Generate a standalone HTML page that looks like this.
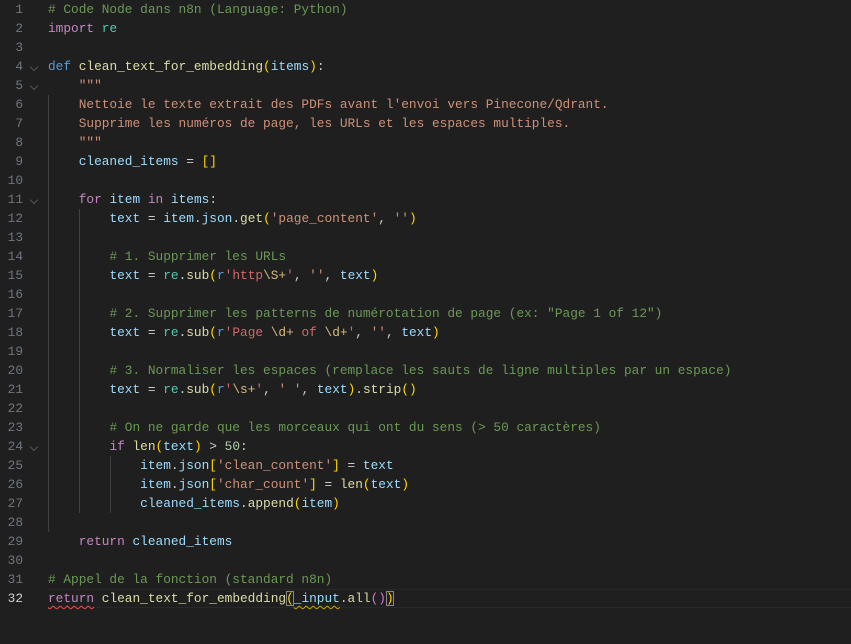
<!DOCTYPE html>
<html><head><meta charset="utf-8"><style>
html,body{margin:0;padding:0;background:#1f1f1f;width:851px;height:644px;overflow:hidden}
body{position:relative;font-family:"Liberation Mono",monospace;font-size:12.8px;color:#cccccc}
.l{position:absolute;left:0;height:19px;line-height:19px;white-space:pre;width:851px}
.ln{position:absolute;left:0;width:23px;text-align:right;color:#6e7681}
.cd{position:absolute;left:48px}
.c{color:#6a9955}.k{color:#c586c0}.d{color:#569cd6}.f{color:#dcdcaa}.v{color:#9cdcfe}
.s{color:#ce9178}.y{color:#ffd700}.p{color:#da70d6}.t{color:#4ec9b0}.n{color:#b5cea8}
.e{color:#d7ba7d}.r{color:#d16969}
.g{position:absolute;width:1px;background:#404040}
.fold{position:absolute;left:31px;width:5px;height:5px;border-right:1px solid #555;border-bottom:1px solid #555;transform:rotate(45deg)}
.cur{position:absolute;left:47px;top:589px;width:804px;height:17px;border-top:1px solid #282828;border-bottom:1px solid #282828}
.sq{text-decoration:underline wavy #f14c4c;text-decoration-thickness:1px;text-underline-offset:3px}
.sq2{text-decoration:underline wavy #cca700;text-decoration-thickness:1px;text-underline-offset:3px}
.bx{outline:1px solid #888;outline-offset:-1px}
</style></head><body>
<div class="cur"></div>
<div class="g" style="left:48px;top:95px;height:437px"></div>
<div class="g" style="left:79px;top:209px;height:304px"></div>
<div class="g" style="left:110px;top:456px;height:57px"></div>
<div class="fold" style="top:64px"></div>
<div class="fold" style="top:83px"></div>
<div class="fold" style="top:197px"></div>
<div class="fold" style="top:444px"></div>

<div class="l" style="top:0"><span class="ln">1</span><span class="cd"><span class="c"># Code Node dans n8n (Language: Python)</span></span></div>
<div class="l" style="top:19px"><span class="ln">2</span><span class="cd"><span class="k">import</span> <span class="t">re</span></span></div>
<div class="l" style="top:38px"><span class="ln">3</span></div>
<div class="l" style="top:57px"><span class="ln">4</span><span class="cd"><span class="d">def</span> <span class="f">clean_text_for_embedding</span><span class="y">(</span><span class="v">items</span><span class="y">)</span>:</span></div>
<div class="l" style="top:76px"><span class="ln">5</span><span class="cd"><span class="s">    """</span></span></div>
<div class="l" style="top:95px"><span class="ln">6</span><span class="cd"><span class="s">    Nettoie le texte extrait des PDFs avant l'envoi vers Pinecone/Qdrant.</span></span></div>
<div class="l" style="top:114px"><span class="ln">7</span><span class="cd"><span class="s">    Supprime les numéros de page, les URLs et les espaces multiples.</span></span></div>
<div class="l" style="top:133px"><span class="ln">8</span><span class="cd"><span class="s">    """</span></span></div>
<div class="l" style="top:152px"><span class="ln">9</span><span class="cd">    <span class="v">cleaned_items</span> = <span class="y">[]</span></span></div>
<div class="l" style="top:171px"><span class="ln">10</span></div>
<div class="l" style="top:190px"><span class="ln">11</span><span class="cd">    <span class="k">for</span> <span class="v">item</span> <span class="k">in</span> <span class="v">items</span>:</span></div>
<div class="l" style="top:209px"><span class="ln">12</span><span class="cd">        <span class="v">text</span> = <span class="v">item</span>.<span class="v">json</span>.<span class="f">get</span><span class="y">(</span><span class="s">'page_content'</span>, <span class="s">''</span><span class="y">)</span></span></div>
<div class="l" style="top:228px"><span class="ln">13</span></div>
<div class="l" style="top:247px"><span class="ln">14</span><span class="cd">        <span class="c"># 1. Supprimer les URLs</span></span></div>
<div class="l" style="top:266px"><span class="ln">15</span><span class="cd">        <span class="v">text</span> = <span class="t">re</span>.<span class="f">sub</span><span class="y">(</span><span class="d">r</span><span class="r">'http</span><span class="e">\S+</span><span class="r">'</span>, <span class="s">''</span>, <span class="v">text</span><span class="y">)</span></span></div>
<div class="l" style="top:285px"><span class="ln">16</span></div>
<div class="l" style="top:304px"><span class="ln">17</span><span class="cd">        <span class="c"># 2. Supprimer les patterns de numérotation de page (ex: "Page 1 of 12")</span></span></div>
<div class="l" style="top:323px"><span class="ln">18</span><span class="cd">        <span class="v">text</span> = <span class="t">re</span>.<span class="f">sub</span><span class="y">(</span><span class="d">r</span><span class="r">'Page </span><span class="e">\d+</span><span class="r"> of </span><span class="e">\d+</span><span class="r">'</span>, <span class="s">''</span>, <span class="v">text</span><span class="y">)</span></span></div>
<div class="l" style="top:342px"><span class="ln">19</span></div>
<div class="l" style="top:361px"><span class="ln">20</span><span class="cd">        <span class="c"># 3. Normaliser les espaces (remplace les sauts de ligne multiples par un espace)</span></span></div>
<div class="l" style="top:380px"><span class="ln">21</span><span class="cd">        <span class="v">text</span> = <span class="t">re</span>.<span class="f">sub</span><span class="y">(</span><span class="d">r</span><span class="r">'</span><span class="e">\s+</span><span class="r">'</span>, <span class="s">' '</span>, <span class="v">text</span><span class="y">)</span>.<span class="f">strip</span><span class="y">()</span></span></div>
<div class="l" style="top:399px"><span class="ln">22</span></div>
<div class="l" style="top:418px"><span class="ln">23</span><span class="cd">        <span class="c"># On ne garde que les morceaux qui ont du sens (&gt; 50 caractères)</span></span></div>
<div class="l" style="top:437px"><span class="ln">24</span><span class="cd">        <span class="k">if</span> <span class="f">len</span><span class="y">(</span><span class="v">text</span><span class="y">)</span> &gt; <span class="n">50</span>:</span></div>
<div class="l" style="top:456px"><span class="ln">25</span><span class="cd">            <span class="v">item</span>.<span class="v">json</span><span class="y">[</span><span class="s">'clean_content'</span><span class="y">]</span> = <span class="v">text</span></span></div>
<div class="l" style="top:475px"><span class="ln">26</span><span class="cd">            <span class="v">item</span>.<span class="v">json</span><span class="y">[</span><span class="s">'char_count'</span><span class="y">]</span> = <span class="f">len</span><span class="y">(</span><span class="v">text</span><span class="y">)</span></span></div>
<div class="l" style="top:494px"><span class="ln">27</span><span class="cd">            <span class="v">cleaned_items</span>.<span class="f">append</span><span class="y">(</span><span class="v">item</span><span class="y">)</span></span></div>
<div class="l" style="top:513px"><span class="ln">28</span></div>
<div class="l" style="top:532px"><span class="ln">29</span><span class="cd">    <span class="k">return</span> <span class="v">cleaned_items</span></span></div>
<div class="l" style="top:551px"><span class="ln">30</span></div>
<div class="l" style="top:570px"><span class="ln">31</span><span class="cd"><span class="c"># Appel de la fonction (standard n8n)</span></span></div>
<div class="l" style="top:589px"><span class="ln" style="color:#cccccc">32</span><span class="cd"><span class="k sq">return</span> <span class="f">clean_text_for_embedding</span><span class="y bx">(</span><span class="v sq2">_input</span>.<span class="f">all</span><span class="p">()</span><span class="y bx">)</span></span></div>
</body></html>
